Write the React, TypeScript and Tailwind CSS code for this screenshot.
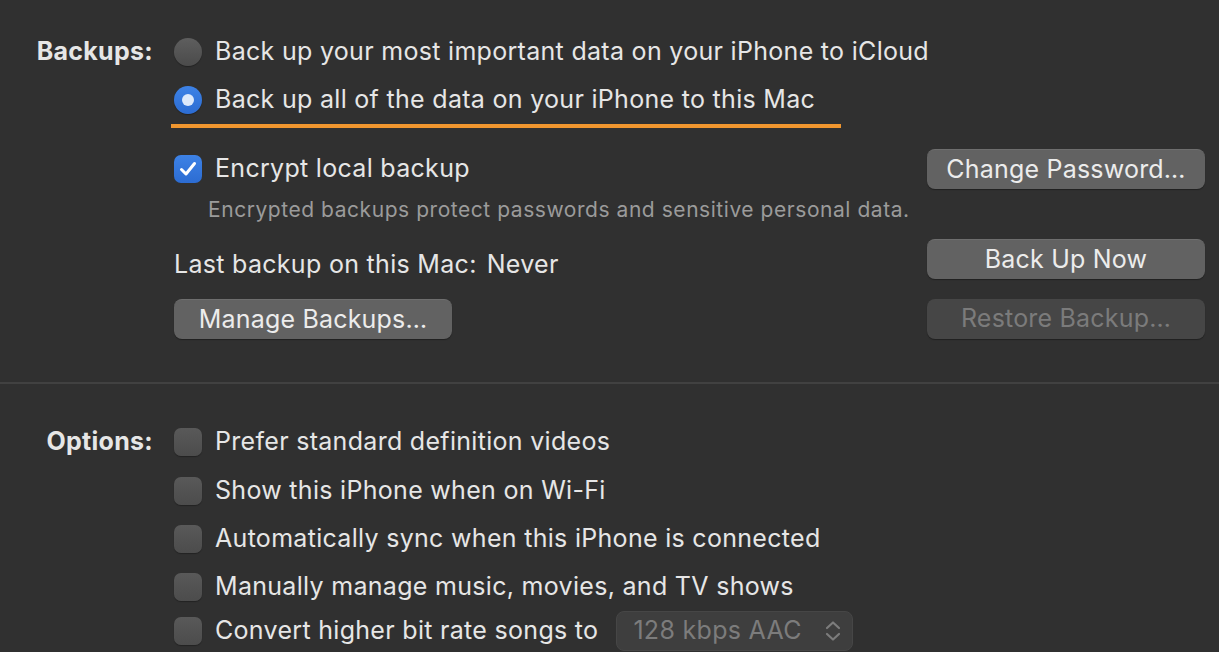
import React from "react";

const Radio = ({ checked }: { checked?: boolean }) =>
  checked ? (
    <div className="w-[28px] h-[28px] rounded-full bg-gradient-to-b from-[#3d82e6] to-[#2c6cd2] flex items-center justify-center shrink-0 shadow-[0_1px_1px_rgba(0,0,0,0.3)]">
      <div className="w-[12px] h-[12px] rounded-full bg-[#dde9fb]" />
    </div>
  ) : (
    <div className="w-[28px] h-[28px] rounded-full bg-gradient-to-b from-[#5e5e5e] to-[#4b4b4b] shrink-0 shadow-[0_1px_1px_rgba(0,0,0,0.3)]" />
  );

const Check = ({ checked }: { checked?: boolean }) =>
  checked ? (
    <div className="w-[28px] h-[28px] rounded-[7px] bg-gradient-to-b from-[#3d82e6] to-[#2c6cd2] flex items-center justify-center shrink-0">
      <svg width="20" height="20" viewBox="0 0 20 20">
        <path d="M3.5 10.5 L8 15 L16.5 4.5" fill="none" stroke="#ffffff" strokeWidth="3" strokeLinecap="round" strokeLinejoin="round" />
      </svg>
    </div>
  ) : (
    <div className="w-[28px] h-[28px] rounded-[7px] bg-gradient-to-b from-[#595959] to-[#4c4c4c] shrink-0 shadow-[0_1px_1px_rgba(0,0,0,0.3)]" />
  );

const Button = ({ children, disabled }: { children: React.ReactNode; disabled?: boolean }) => (
  <div
    className={
      "h-[40px] w-[278px] shrink-0 rounded-[8px] flex items-center justify-center text-[25px] tracking-[0.2px] shadow-[0_1px_1px_rgba(0,0,0,0.35)] " +
      (disabled ? "bg-[#464646] text-[#7b7b7b]" : "bg-[#626262] text-[#ececec] border-t border-[#6e6e6e]")
    }
  >
    {children}
  </div>
);

const Row = ({ h, children }: { h: string; children: React.ReactNode }) => (
  <div className={h + " flex items-center gap-[13px]"}>{children}</div>
);

export default function App() {
  return (
    <div
      className="w-full h-[652px] bg-[#303030] text-[#e6e6e6] overflow-hidden text-[25px] tracking-[0.3px]"
      style={{ fontFamily: "Inter, 'Noto Sans', sans-serif" }}
    >
      {/* Backups section */}
      <div className="flex pt-[28px]">
        <div className="w-[174px] shrink-0 pr-[21px]">
          <div className="h-[48px] flex items-center justify-end font-bold">Backups:</div>
        </div>
        <div className="flex-1 pr-[14px]">
          <Row h="h-[48px]">
            <Radio />
            <span>Back up your most important data on your iPhone to iCloud</span>
          </Row>
          <Row h="h-[48px]">
            <Radio checked />
            <span>Back up all of the data on your iPhone to this Mac</span>
          </Row>
          <div className="ml-[-3px] w-[670px] h-[4px] bg-[#f0962f]" />
          <div className="mt-[21px] h-[40px] flex items-center justify-between">
            <div className="flex items-center gap-[13px]">
              <Check checked />
              <span>Encrypt local backup</span>
            </div>
            <Button>Change Password…</Button>
          </div>
          <div className="h-[26px] mt-[8px] flex items-center pl-[34px] text-[21px] tracking-[0.55px] text-[#9b9b9b]">
            Encrypted backups protect passwords and sensitive personal data.
          </div>
          <div className="mt-[16px] h-[40px] flex items-start justify-between">
            <div className="mt-[10px] leading-[30px] flex gap-[10px]">
              <span>Last backup on this Mac:</span>
              <span>Never</span>
            </div>
            <Button>Back Up Now</Button>
          </div>
          <div className="mt-[20px] h-[40px] flex items-center justify-between">
            <Button>Manage Backups…</Button>
            <Button disabled>Restore Backup…</Button>
          </div>
        </div>
      </div>

      <div className="mt-[43px] h-[2px] bg-[#414141]" />

      {/* Options section */}
      <div className="flex pt-[34px]">
        <div className="w-[174px] shrink-0 pr-[21px]">
          <div className="h-[48px] flex items-center justify-end font-bold">Options:</div>
        </div>
        <div className="flex-1">
          <Row h="h-[48px]">
            <Check />
            <span>Prefer standard definition videos</span>
          </Row>
          <Row h="h-[49px]">
            <Check />
            <span>Show this iPhone when on Wi-Fi</span>
          </Row>
          <Row h="h-[48px]">
            <Check />
            <span>Automatically sync when this iPhone is connected</span>
          </Row>
          <Row h="h-[48px]">
            <Check />
            <span>Manually manage music, movies, and TV shows</span>
          </Row>
          <Row h="h-[40px]">
            <Check />
            <span>Convert higher bit rate songs to</span>
            <div className="ml-[5px] w-[237px] h-[40px] shrink-0 rounded-[8px] bg-[#3e3e3e] border border-[#464646] flex items-center justify-between pl-[16px] pr-[10px] text-[#7c7c7c]">
              <span>128 kbps AAC</span>
              <svg width="18" height="24" viewBox="0 0 18 24">
                <path d="M3 9 L9 3.5 L15 9" fill="none" stroke="#7c7c7c" strokeWidth="2.2" strokeLinecap="round" strokeLinejoin="round" />
                <path d="M3 15 L9 20.5 L15 15" fill="none" stroke="#7c7c7c" strokeWidth="2.2" strokeLinecap="round" strokeLinejoin="round" />
              </svg>
            </div>
          </Row>
        </div>
      </div>
    </div>
  );
}
